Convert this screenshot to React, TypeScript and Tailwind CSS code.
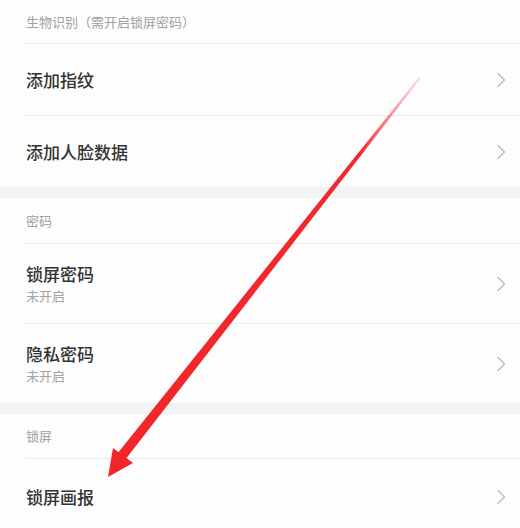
import React from 'react';

type Item = { title: string; sub?: string };

const sections: { header: string; headerH: string; items: Item[]; rowH: string }[] = [
  {
    header: '生物识别（需开启锁屏密码）',
    headerH: 'h-[43px]',
    rowH: 'h-[72px]',
    items: [{ title: '添加指纹' }, { title: '添加人脸数据' }],
  },
  {
    header: '密码',
    headerH: 'h-[45px]',
    rowH: 'h-[80px]',
    items: [
      { title: '锁屏密码', sub: '未开启' },
      { title: '隐私密码', sub: '未开启' },
    ],
  },
  {
    header: '锁屏',
    headerH: 'h-[44px]',
    rowH: 'h-[76px]',
    items: [{ title: '锁屏画报' }],
  },
];

function Chevron() {
  return (
    <svg width="10" height="16" viewBox="0 0 10 16" fill="none" className="shrink-0">
      <path d="M2 1.5 L8.5 8 L2 14.5" stroke="#bdbdbd" strokeWidth="1.4" strokeLinecap="round" strokeLinejoin="round" />
    </svg>
  );
}

function Row({ item, h }: { item: Item; h: string }) {
  return (
    <div className={`flex items-center ${h} border-t border-[#ececec] pr-[14px]`}>
      <div className="flex-1 flex flex-col">
        <span className="text-[17px] leading-[22px] font-medium text-[#333333]">{item.title}</span>
        {item.sub && <span className="text-[13px] leading-[18px] text-[#a3a3a3] mt-[2px]">{item.sub}</span>}
      </div>
      <Chevron />
    </div>
  );
}

function Arrow() {
  // red annotation arrow drawn over the list
  return (
    <svg className="absolute inset-0 pointer-events-none" width="520" height="528" viewBox="0 0 520 528">
      <defs>
        <linearGradient id="fade" x1="121" y1="457" x2="420" y2="78" gradientUnits="userSpaceOnUse">
          <stop offset="0" stopColor="#f2262a" />
          <stop offset="0.8" stopColor="#f0282e" />
          <stop offset="1" stopColor="#f26a78" stopOpacity="0.2" />
        </linearGradient>
      </defs>
      <polygon points="117,454 125,460 421,78 419,77" fill="url(#fade)" />
      <polygon points="108,477 113,448 133,463" fill="#f2262a" />
    </svg>
  );
}

export default function App() {
  return (
    <div
      className="relative w-[520px] h-[528px] overflow-hidden bg-[#fdfdfd]"
      style={{ fontFamily: '"Noto Sans CJK SC", "Noto Sans", sans-serif' }}
    >
      {sections.map((s, si) => (
        <div key={s.header}>
          {si > 0 && <div className="h-[11px] bg-[#f2f4f3]" />}
          <div className="pl-[26px]">
            <div className={`flex items-center ${s.headerH}`}>
              <span className="text-[13px] text-[#a0a0a0]">{s.header}</span>
            </div>
            {s.items.map((it) => (
              <Row key={it.title} item={it} h={s.rowH} />
            ))}
          </div>
        </div>
      ))}
      <Arrow />
    </div>
  );
}
